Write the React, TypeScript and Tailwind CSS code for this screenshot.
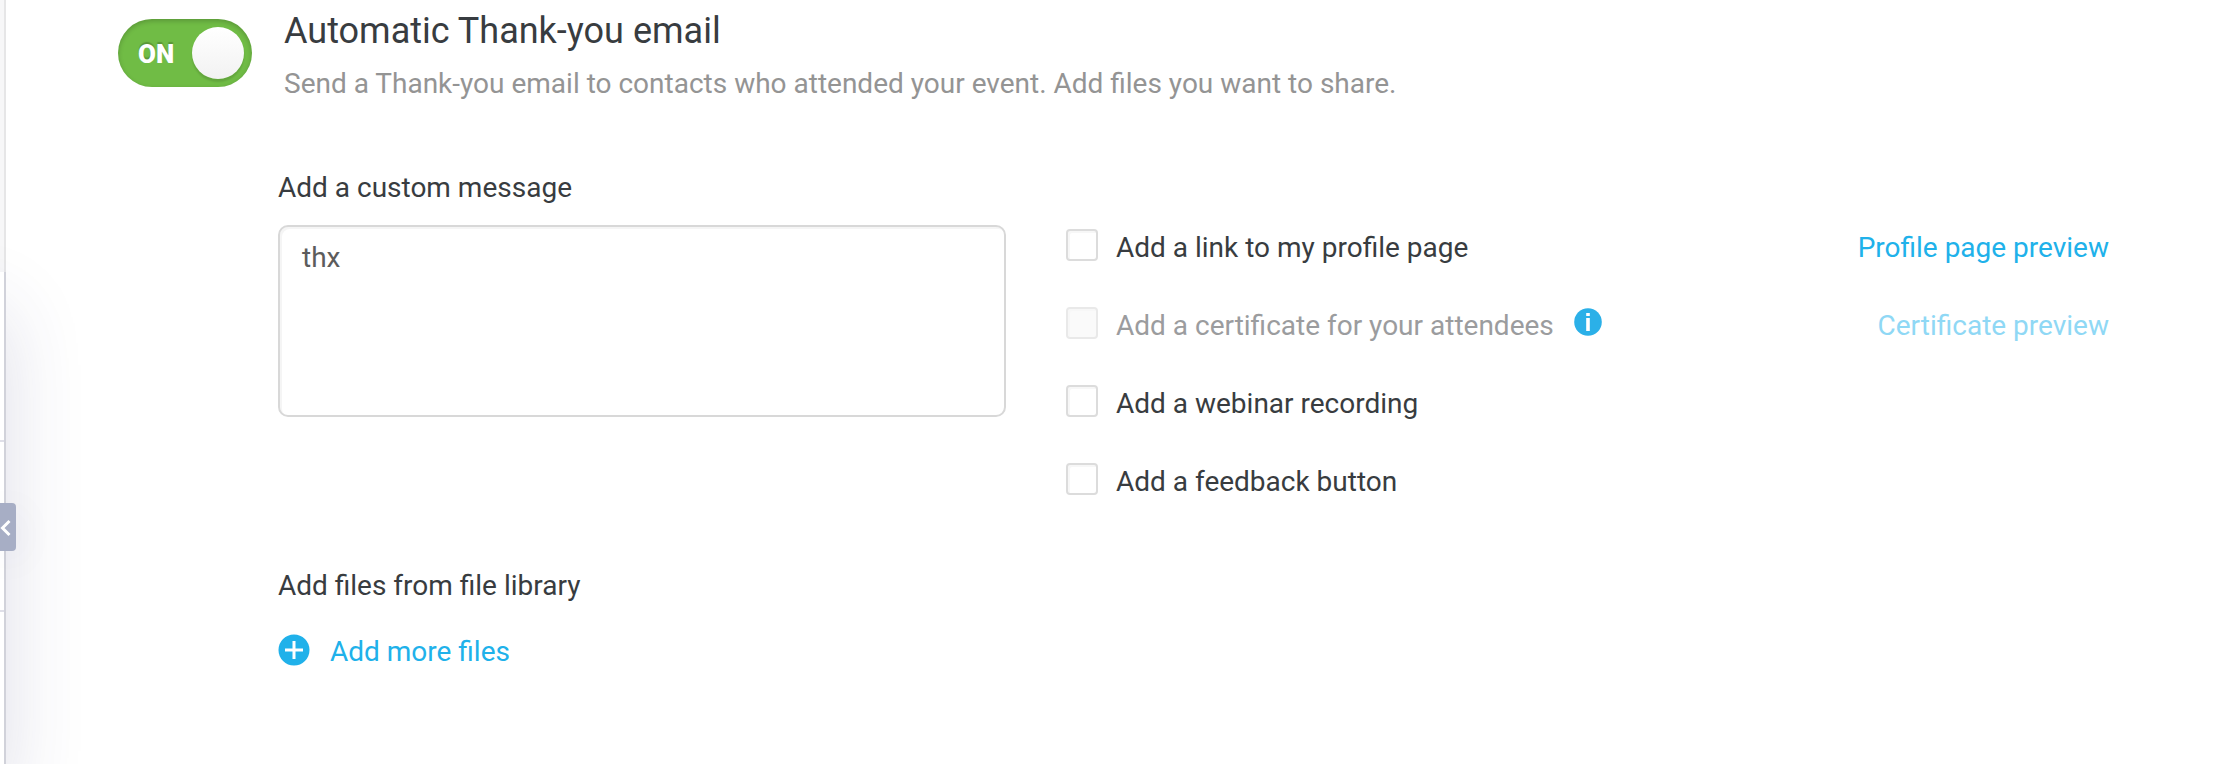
import { useState } from "react";

type Option = {
  id: string;
  label: string;
  disabled?: boolean;
  info?: boolean;
  preview?: string;
};

const options: Option[] = [
  { id: "profile", label: "Add a link to my profile page", preview: "Profile page preview" },
  {
    id: "certificate",
    label: "Add a certificate for your attendees",
    disabled: true,
    info: true,
    preview: "Certificate preview",
  },
  { id: "recording", label: "Add a webinar recording" },
  { id: "feedback", label: "Add a feedback button" },
];

function SidePanel() {
  return (
    <aside className="relative -ml-[200px] flex w-[206px] shrink-0 flex-col">
      <div className="h-[272px] shrink-0 border-r-2 border-[#e6e6e7] bg-[#f7f7f8]" />
      <div className="flex flex-1 flex-col border-r-2 border-[#d1d2da] bg-white shadow-[0_40px_80px_rgba(50,50,110,0.16)]">
        <div className="h-[170px] shrink-0 border-b-2 border-[#dfdfe8]" />
        <div className="h-[170px] shrink-0 border-b-2 border-[#dfdfe8]" />
      </div>
      <button
        type="button"
        aria-label="Collapse panel"
        className="absolute top-[503px] -right-[10px] flex h-12 w-4 items-center rounded-r bg-[#a7aec5] shadow-[0_8px_40px_rgba(40,50,100,0.08)]"
      >
        <svg width="12" height="20" viewBox="0 0 12 20" fill="none" stroke="#fff" strokeWidth="3">
          <path d="M9.5 4 2.5 11l7 7" />
        </svg>
      </button>
    </aside>
  );
}

function Toggle({ on, onChange }: { on: boolean; onChange: () => void }) {
  return (
    <button
      type="button"
      role="switch"
      aria-checked={on}
      aria-labelledby="thank-you-title"
      onClick={onChange}
      className={
        "mt-3 flex h-[68px] w-[134px] shrink-0 items-center justify-between rounded-full pr-2 pl-5 shadow-[inset_0_2px_5px_rgba(0,0,0,0.2)] " +
        (on ? "bg-[#70bc45]" : "flex-row-reverse bg-gray-400")
      }
    >
      <span className="pt-0.5 text-[26px] font-black text-white [text-shadow:0_-2px_1px_rgba(0,0,0,0.2)]">
        {on ? "ON" : "OFF"}
      </span>
      <span className="size-[52px] rounded-full bg-linear-to-b from-white to-[#f2f2f2] shadow-[0_3px_2px_rgba(0,0,0,0.12)]" />
    </button>
  );
}

function OptionRow({ option }: { option: Option }) {
  return (
    <li className="flex items-start">
      <input
        id={option.id}
        type="checkbox"
        disabled={option.disabled}
        className="mt-px size-8 shrink-0 appearance-none rounded border-2 border-[#dcdcdc] bg-white shadow-[inset_2px_2px_0_#f7f7f7] checked:bg-[#22b2ea] disabled:border-[#e9e9e9] disabled:bg-[#fafafa]"
      />
      <label htmlFor={option.id} className={option.disabled ? "ml-[18px] text-[#9b9c9e]" : "ml-[18px]"}>
        {option.label}
      </label>
      {option.info && (
        <button type="button" aria-label="About certificates" className="mt-0.5 ml-5">
          <svg width="28" height="28" viewBox="0 0 28 28">
            <circle cx="14" cy="14" r="13.8" fill="#2bb0e8" />
            <path d="M12.2 5h3.6v3h-3.6zM12.2 10h3.6v13h-3.6z" fill="#fff" />
          </svg>
        </button>
      )}
      {option.preview && (
        <a
          href={"#" + option.id}
          aria-disabled={option.disabled}
          className={option.disabled ? "ml-auto text-[#8fd8f5]" : "ml-auto text-[#20b1ea]"}
        >
          {option.preview}
        </a>
      )}
    </li>
  );
}

export default function App() {
  const [on, setOn] = useState(true);
  return (
    <div className="flex min-h-screen overflow-hidden bg-white font-[Roboto,sans-serif] text-[28px] leading-10 text-[#383c40]">
      <SidePanel />
      <main className="relative min-w-0 flex-1 pt-[7px] pr-[107px] pb-8 pl-28">
        <header className="flex items-start gap-8">
          <Toggle on={on} onChange={() => setOn(!on)} />
          <div>
            <h1 id="thank-you-title" className="text-4xl leading-12">
              Automatic Thank-you email
            </h1>
            <p className="mt-[9px] text-[#949494]">
              Send a Thank-you email to contacts who attended your event. Add files you want to share.
            </p>
          </div>
        </header>

        <div className="mt-16 pl-40">
          <label htmlFor="message">Add a custom message</label>
          <div className="mt-[17px] grid grid-cols-[728fr_1043fr] items-start gap-[60px]">
            <textarea
              id="message"
              defaultValue="thx"
              className="h-48 w-full resize-none rounded-[10px] border-2 border-[#d8d8d8] px-[22px] pt-[11px] text-[#5c5c5c] shadow-[inset_2px_2px_0_#f5f5f5] outline-none"
            />
            <ul className="mt-[3px] flex flex-col gap-[38px]">
              {options.map((option) => (
                <OptionRow key={option.id} option={option} />
              ))}
            </ul>
          </div>

          <section className="mt-16">
            <h2>Add files from file library</h2>
            <button type="button" className="mt-[26px] flex items-start gap-5 text-[#20b1ea]">
              <svg width="32" height="32" viewBox="0 0 32 32" className="mt-0.5">
                <circle cx="16" cy="16" r="15.5" fill="#20b1ea" />
                <path d="M16 7v18M7 16h18" stroke="#fff" strokeWidth="3" />
              </svg>
              Add more files
            </button>
          </section>
        </div>
      </main>
    </div>
  );
}
